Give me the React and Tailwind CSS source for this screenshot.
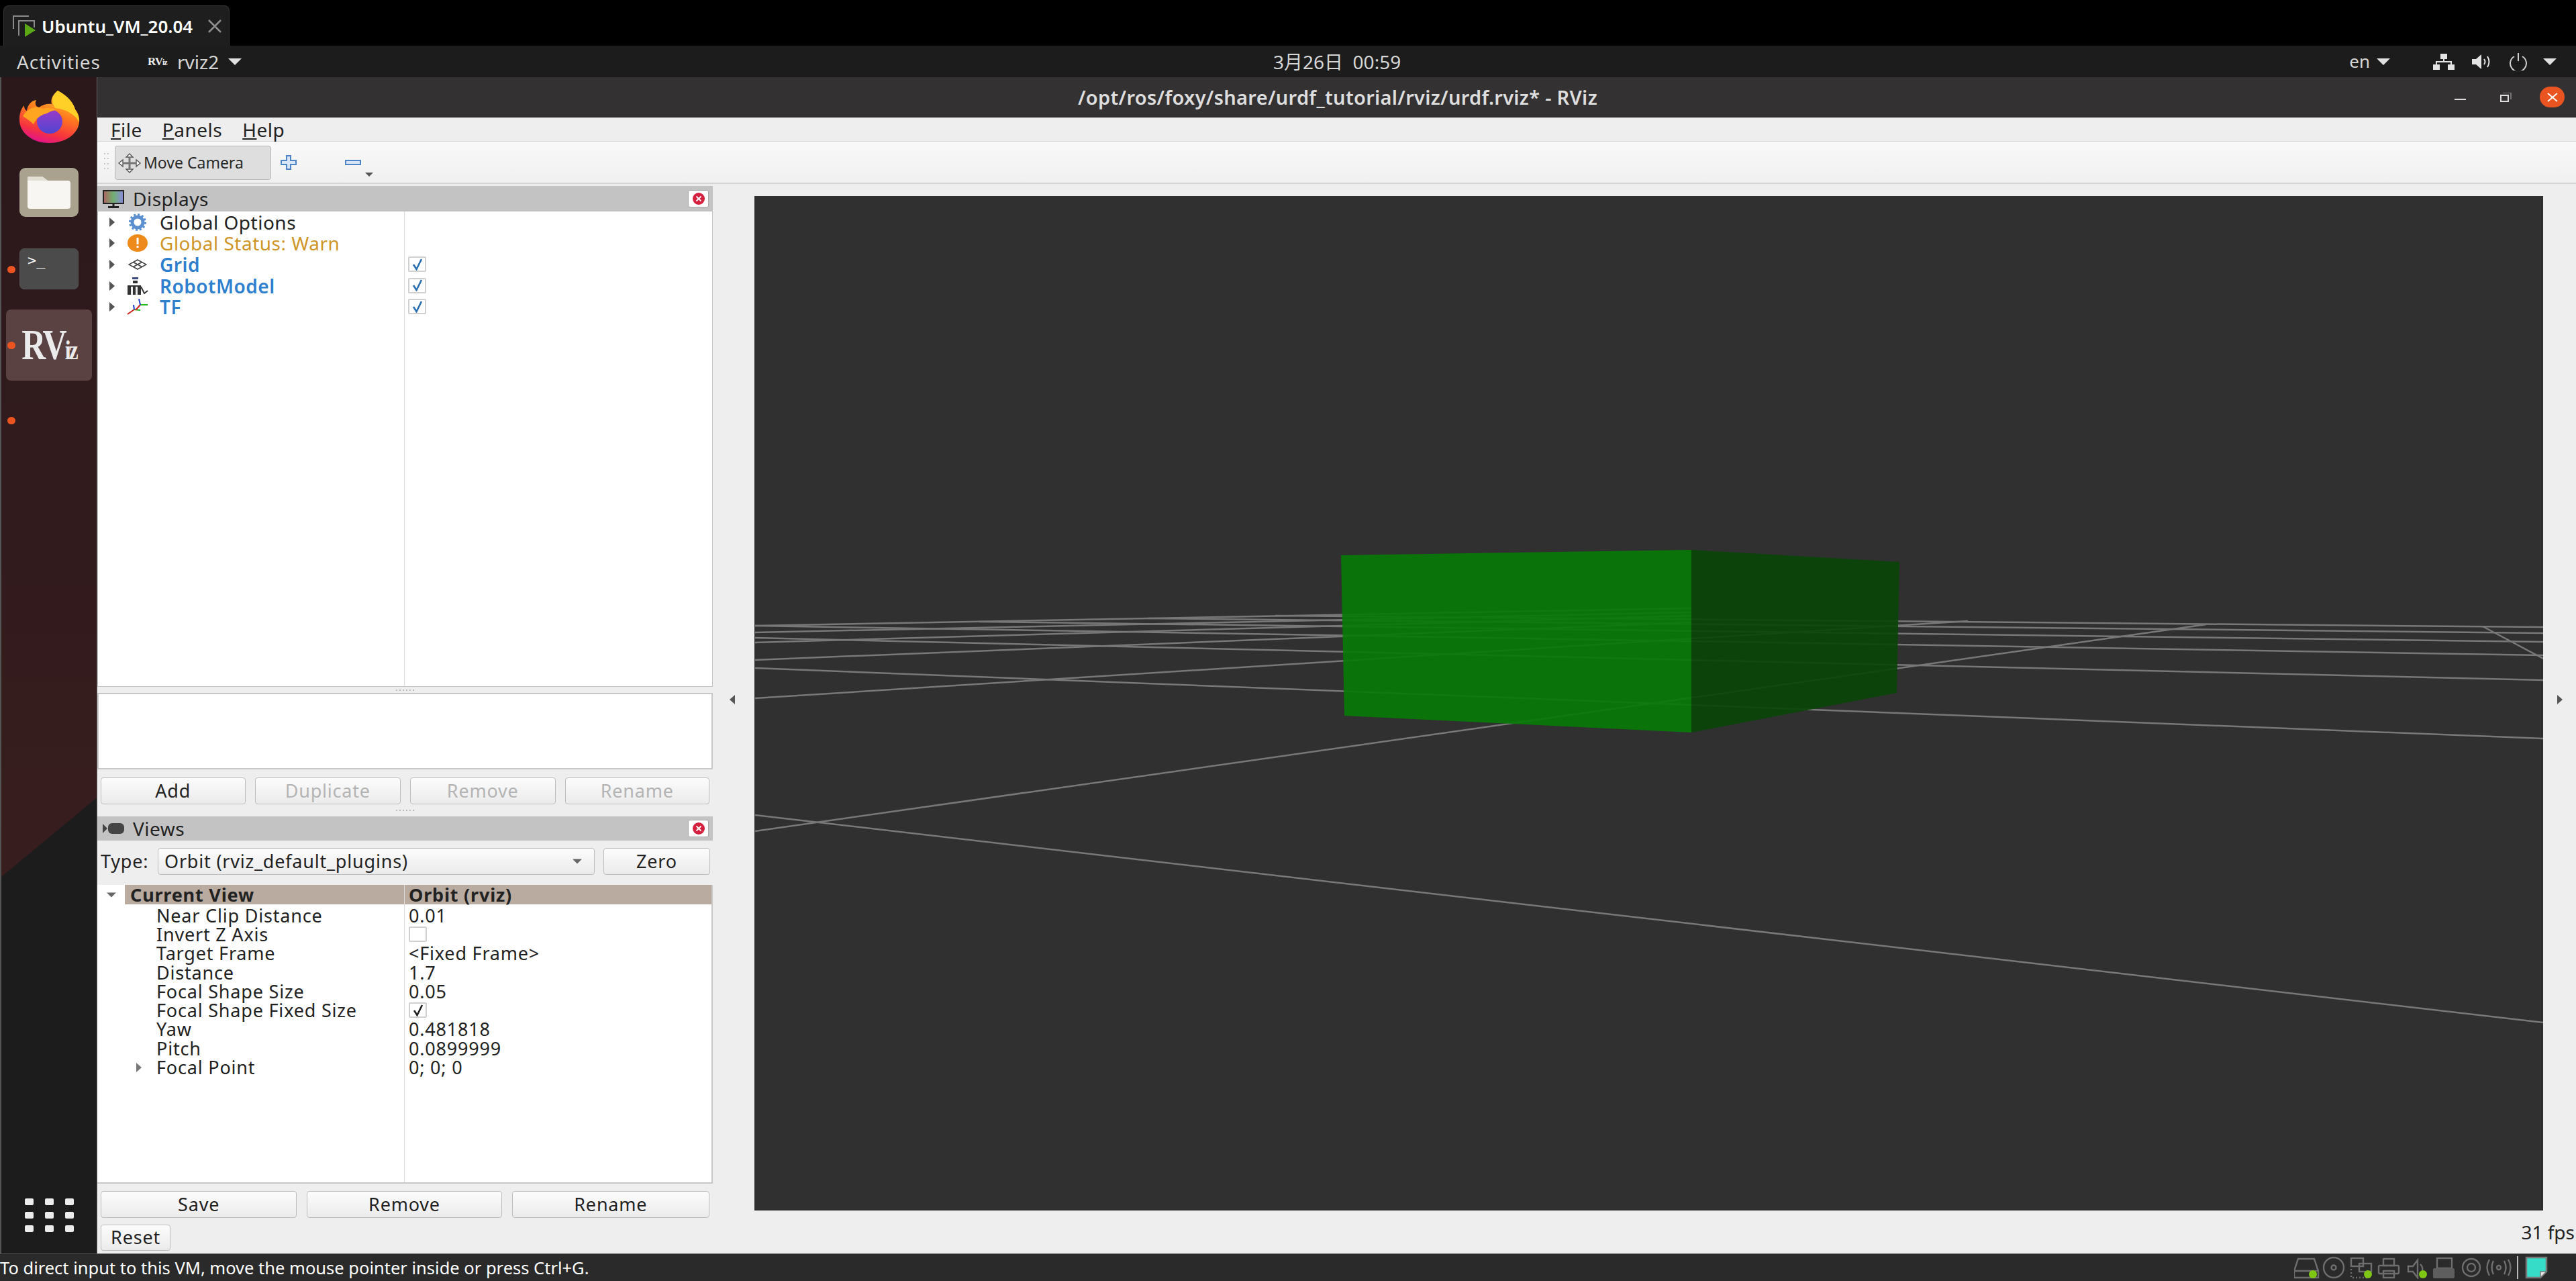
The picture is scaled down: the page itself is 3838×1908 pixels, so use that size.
import React from 'react';

const SANS = "[font-family:'Noto_Sans','Noto_Sans_CJK_SC',sans-serif]";

// grid lines of the 3D view, in page coordinates (the svg viewBox starts at the viewport corner)
const GRID_LINES = [
  [1125, 1040, 2932, 925],
  [1125, 995, 3789, 1100],
  [1125, 1238, 3287, 930],
  [1125, 1214, 3789, 1523],
  [1125, 983, 2520, 927],
  [1125, 957, 2520, 917],
  [1125, 942, 2520, 912],
  [1125, 932, 2520, 906],
  [1125, 950, 3789, 1013],
  [1125, 932, 3789, 976],
  [1459, 926, 3789, 956],
  [1711, 921, 3789, 943],
  [1900, 917, 3789, 934],
  [3699, 933, 3789, 981],
];

const VIEW_ROWS = [
  ['Near Clip Distance', '0.01'],
  ['Invert Z Axis', 'off'],
  ['Target Frame', '<Fixed Frame>'],
  ['Distance', '1.7'],
  ['Focal Shape Size', '0.05'],
  ['Focal Shape Fixed Size', 'on'],
  ['Yaw', '0.481818'],
  ['Pitch', '0.0899999'],
  ['Focal Point', '0; 0; 0'],
];

function Caret({ className = '' }) {
  return (
    <svg width="20" height="10" viewBox="0 0 20 10" className={className}>
      <polygon points="0,0 20,0 10,10" fill="currentColor" />
    </svg>
  );
}

function RightArrow({ color = '#555' }) {
  return (
    <svg width="8" height="14" viewBox="0 0 8 14">
      <polygon points="0,0 8,7 0,14" fill={color} />
    </svg>
  );
}

function Btn({ children, disabled, className = '' }) {
  return (
    <div
      className={`flex items-center justify-center h-[40px] rounded-[4px] border border-[#bdbdbd] bg-gradient-to-b from-[#fcfcfc] to-[#ebebeb] text-[27px] tracking-[0.8px] ${
        disabled ? 'text-[#b4b4b4]' : 'text-[#222]'
      } ${className}`}
    >
      {children}
    </div>
  );
}

function Check({ on, color = '#2a6fb0' }) {
  return (
    <div className="w-[27px] h-[23px] bg-white border-2 border-[#d0d0d0] rounded-[2px] flex items-center justify-center">
      {on && (
        <svg width="18" height="18" viewBox="0 0 18 18">
          <path d="M3 9 L7.5 16 L15 1" fill="none" stroke={color} strokeWidth="2.6" />
        </svg>
      )}
    </div>
  );
}

function CloseBtn() {
  return (
    <div className="w-[31px] h-[26px] bg-white border border-[#aaa] rounded-[3px] flex items-center justify-center">
      <svg width="20" height="20" viewBox="0 0 20 20">
        <circle cx="10" cy="10" r="9" fill="#d4213d" />
        <path d="M6.5 6.5 L13.5 13.5 M13.5 6.5 L6.5 13.5" stroke="#fff" strokeWidth="1.8" />
      </svg>
    </div>
  );
}

function Dots({ className = '' }) {
  return (
    <div className={`flex justify-center gap-[3px] ${className}`}>
      {[0, 1, 2, 3, 4, 5].map(i => (
        <span key={i} className="w-[2px] h-[2px] bg-[#bbb]" />
      ))}
    </div>
  );
}

function Firefox() {
  return (
    <svg width="91" height="78" viewBox="0 0 91 78">
      <defs>
        <linearGradient id="ffBody" x1="0.75" y1="0" x2="0.4" y2="1">
          <stop offset="0" stopColor="#ffd43a" />
          <stop offset="0.45" stopColor="#ff7a1e" />
          <stop offset="0.8" stopColor="#f5333f" />
          <stop offset="1" stopColor="#e31587" />
        </linearGradient>
        <linearGradient id="ffGlobe" x1="0.5" y1="0" x2="0.5" y2="1">
          <stop offset="0" stopColor="#9a3ac8" />
          <stop offset="1" stopColor="#4f46d0" />
        </linearGradient>
      </defs>
      <path d="M58 0 C74 8 82 20 84 28 C88 32 91 40 90 47 C88 66 68 78 45 78 C20 78 0 62 1 42 C1 34 4 26 8 22 C8 27 10 29 12 30 C13 22 18 15 26 14 C23 20 26 24 30 25 C36 20 44 19 49 20 C47 12 51 6 58 0 Z" fill="url(#ffBody)" />
      <path d="M58 0 C74 8 82 20 84 28 C88 34 90 40 90 47 C84 36 72 28 54 26 C47 14 51 6 58 0 Z" fill="#ffd028" />
      <ellipse cx="46" cy="46" rx="19" ry="18" fill="url(#ffGlobe)" />
      <path d="M6 38 C14 24 28 22 36 27 C44 24 52 27 56 29 C46 30 44 34 38 35 C30 38 26 42 22 50 C18 46 12 42 6 38 Z" fill="#ffa51f" />
    </svg>
  );
}

function RvizLogo({ big }) {
  return (
    <span
      className={`[font-family:'Liberation_Serif',serif] font-bold text-[#ecebeb] leading-none whitespace-nowrap ${
        big ? 'text-[50px] tracking-[-3px] scale-y-125' : 'text-[17px] tracking-[-1px]'
      }`}
    >
      RV<span className={big ? 'text-[32px]' : 'text-[12px]'}>iz</span>
    </span>
  );
}

function Dock() {
  return (
    <div className="relative w-[145px] flex flex-col items-center bg-gradient-to-b from-[#2a181b] to-[#3f2020] border-l-2 border-l-[#555] border-r border-r-[#666] overflow-hidden">
      {/* dark wedge of the wallpaper */}
      <svg className="absolute left-0 top-[1071px]" width="145" height="681" viewBox="0 0 145 681">
        <polygon points="0,120 145,0 145,681 0,681" fill="#1c1c1c" />
      </svg>

      <div className="relative mt-[20px]">
        <Firefox />
      </div>
      <div className="relative mt-[37px] w-[88px] h-[73px] rounded-[9px] bg-[#a8a28f] flex items-center justify-center">
        <svg width="64" height="48" viewBox="0 0 64 48">
          <path d="M2 0 H22 L30 6 H60 Q64 6 64 10 V44 Q64 48 60 48 H4 Q0 48 0 44 V2 Q0 0 2 0Z" fill="#f8f6f2" />
          <path d="M0 6 H30 L22 0 H2 Q0 0 0 2Z" fill="#e3dfd4" />
        </svg>
      </div>
      <div className="relative mt-[47px] w-[88px] h-[61px] rounded-[7px] bg-[#4b4b4b] border border-[#555]">
        <div className="absolute left-[11px] top-[4px] text-[#f0f0f0] text-[22px] leading-[26px] [font-family:'DejaVu_Sans_Mono',monospace]">
          &gt;_
        </div>
      </div>
      <div className="relative mt-[30px] w-[128px] h-[106px] rounded-[7px] bg-[#5a4242] flex items-center justify-center">
        <RvizLogo big />
      </div>

      <span className="absolute left-[9px] top-[281px] w-[12px] h-[11px] rounded-full bg-[#e95420]" />
      <span className="absolute left-[9px] top-[394px] w-[12px] h-[11px] rounded-full bg-[#e95420]" />
      <span className="absolute left-[9px] top-[506px] w-[12px] h-[11px] rounded-full bg-[#e95420]" />

      <div className="relative mt-auto mb-[32px] grid grid-cols-3 gap-x-[17px] gap-y-[10px]">
        {[0, 1, 2, 3, 4, 5, 6, 7, 8].map(i => (
          <span key={i} className="w-[13px] h-[10px] rounded-[2px] bg-[#ececec]" />
        ))}
      </div>
    </div>
  );
}

function DisplayIcon({ name }) {
  if (name === 'gear') {
    return (
      <svg width="28" height="26" viewBox="0 0 28 26">
        <circle cx="14" cy="13" r="8" fill="none" stroke="#5b8fd0" strokeWidth="5" />
        <circle cx="14" cy="13" r="11.5" fill="none" stroke="#5b8fd0" strokeWidth="3" strokeDasharray="3 3" />
      </svg>
    );
  }
  if (name === 'warn') {
    return (
      <svg width="30" height="26" viewBox="0 0 30 26">
        <ellipse cx="15" cy="13" rx="15" ry="13" fill="#ee8a1a" />
        <rect x="13.5" y="5" width="3" height="10" fill="#fff" />
        <rect x="13.5" y="17" width="3" height="3" fill="#fff" />
      </svg>
    );
  }
  if (name === 'grid') {
    return (
      <svg width="28" height="16" viewBox="0 0 28 16">
        <path d="M14 1 L27 8 L14 15 L1 8Z M7.5 4.5 L20.5 11.5 M20.5 4.5 L7.5 11.5" fill="none" stroke="#444" strokeWidth="1.6" />
      </svg>
    );
  }
  if (name === 'robot') {
    return (
      <svg width="32" height="26" viewBox="0 0 32 26">
        <rect x="8" y="0" width="9" height="3" fill="#3a4a80" />
        <rect x="9" y="5" width="7" height="4" fill="#333" />
        <rect x="1" y="12" width="20" height="14" fill="#333" />
        <rect x="6" y="14" width="3" height="12" fill="#eee" />
        <rect x="13" y="14" width="3" height="12" fill="#eee" />
        <path d="M21 14 L26 24 L31 20" fill="none" stroke="#333" strokeWidth="2" />
      </svg>
    );
  }
  return (
    <svg width="32" height="24" viewBox="0 0 32 24">
      <path d="M11 16 L1 23" stroke="#d02020" strokeWidth="2" />
      <path d="M11 16 L20 17" stroke="#20c020" strokeWidth="2" />
      <path d="M11 16 L10 9" stroke="#2040d0" strokeWidth="2" />
      <path d="M20 9 L13 17" stroke="#d02020" strokeWidth="2" />
      <path d="M20 9 L31 9" stroke="#20c020" strokeWidth="2" />
      <path d="M20 9 L18 0" stroke="#2040d0" strokeWidth="2" />
    </svg>
  );
}

function DisplayRow({ icon, label, className }) {
  return (
    <div className="h-[31.6px] flex items-center">
      <span className="w-[18px] ml-[17px] flex"><RightArrow /></span>
      <span className="w-[38px] flex justify-center pr-[2px] ml-[6px]"><DisplayIcon name={icon} /></span>
      <span className={`ml-[13px] text-[28px] tracking-[0.5px] leading-none ${className}`}>{label}</span>
    </div>
  );
}

function LeftPanels() {
  return (
    <div className="w-[917px] pt-[3px] flex flex-col">
      {/* Displays */}
      <div className="h-[38px] bg-[#c3c3c3] flex items-center pl-[8px] pr-[6px]">
        <svg width="32" height="27" viewBox="0 0 32 27">
          <defs>
            <linearGradient id="screenGrad" x1="0" y1="0" x2="1" y2="0">
              <stop offset="0" stopColor="#b06060" />
              <stop offset="0.5" stopColor="#70b070" />
              <stop offset="1" stopColor="#8a8ae0" />
            </linearGradient>
          </defs>
          <rect x="1" y="1" width="30" height="19" fill="url(#screenGrad)" stroke="#222" strokeWidth="2" />
          <path d="M16 20 V24 M8 25.5 H24" stroke="#222" strokeWidth="3" />
        </svg>
        <span className="ml-[13px] text-[28px] tracking-[0.5px] text-[#222]">Displays</span>
        <div className="ml-auto"><CloseBtn /></div>
      </div>
      <div className="h-[708px] bg-white border border-t-0 border-[#c4c4c4] flex">
        <div className="w-[457px] border-r border-[#dcdcdc]">
          <DisplayRow icon="gear" label="Global Options" className="text-[#222]" />
          <DisplayRow icon="warn" label="Global Status: Warn" className="text-[#cf9527]" />
          <DisplayRow icon="grid" label="Grid" className="text-[#2f7fcf] font-semibold" />
          <DisplayRow icon="robot" label="RobotModel" className="text-[#2f7fcf] font-semibold" />
          <DisplayRow icon="tf" label="TF" className="text-[#2f7fcf] font-semibold" />
        </div>
        <div className="flex-1 pl-[5px] pt-[63px]">
          <div className="h-[31.6px] flex items-center"><Check on /></div>
          <div className="h-[31.6px] flex items-center"><Check on /></div>
          <div className="h-[31.6px] flex items-center"><Check on /></div>
        </div>
      </div>
      <Dots className="h-[9px] items-center" />
      <div className="h-[114px] bg-white border-2 border-[#c8c8c8]" />
      <div className="mt-[12px] flex gap-[14px] px-[5px]">
        <Btn className="w-[216px]">Add</Btn>
        <Btn disabled className="w-[218px]">Duplicate</Btn>
        <Btn disabled className="w-[217px]">Remove</Btn>
        <Btn disabled className="w-[216px]">Rename</Btn>
      </div>
      <Dots className="h-[18px] items-center" />

      {/* Views */}
      <div className="h-[36px] bg-[#c3c3c3] flex items-center pl-[8px] pr-[6px]">
        <svg width="32" height="20" viewBox="0 0 32 20">
          <polygon points="0,3 7,10 0,17" fill="#444" />
          <rect x="8" y="2" width="24" height="16" rx="6" fill="#444" />
        </svg>
        <span className="ml-[13px] text-[28px] tracking-[0.5px] text-[#222]">Views</span>
        <div className="ml-auto"><CloseBtn /></div>
      </div>
      <div className="mt-[11px] h-[40px] flex items-center pl-[5px] pr-[4px] text-[27px] tracking-[0.8px] text-[#222]">
        <span className="w-[85px]">Type:</span>
        <div className="w-[651px] h-[40px] px-[9px] rounded-[4px] border border-[#bdbdbd] bg-gradient-to-b from-[#fcfcfc] to-[#ebebeb] flex items-center justify-between">
          <span>Orbit (rviz_default_plugins)</span>
          <Caret className="w-[14px] h-[8px] mr-[9px] text-[#666]" />
        </div>
        <Btn className="w-[159px] ml-[13px]">Zero</Btn>
      </div>
      <div className="mt-[15px] h-[445px] bg-white border-r-2 border-b-2 border-[#c8c8c8] flex text-[27px] tracking-[0.8px] text-[#222]">
        <div className="w-[458px] border-r border-[#dcdcdc]">
          <div className="h-[29px] flex">
            <div className="w-[41px] flex items-center justify-center">
              <Caret className="w-[14px] h-[8px] text-[#666]" />
            </div>
            <div className="flex-1 bg-[#b9aba0] pl-[8px] font-bold leading-[29px]">Current View</div>
          </div>
          <div className="pt-[2px]">
            {VIEW_ROWS.map(([label]) => (
              <div key={label} className="h-[28.3px] flex items-center pl-[88px] relative leading-none whitespace-nowrap">
                {label === 'Focal Point' && (
                  <span className="absolute left-[58px] flex"><RightArrow color="#777" /></span>
                )}
                {label}
              </div>
            ))}
          </div>
        </div>
        <div className="flex-1">
          <div className="h-[29px] bg-[#b9aba0] pl-[6px] font-bold leading-[29px]">Orbit (rviz)</div>
          <div className="pt-[2px]">
            {VIEW_ROWS.map(([label, value]) => (
              <div key={label} className="h-[28.3px] flex items-center pl-[6px] leading-none">
                {value === 'off' && <Check />}
                {value === 'on' && <Check on color="#222" />}
                {value !== 'on' && value !== 'off' && value}
              </div>
            ))}
          </div>
        </div>
      </div>
      <div className="mt-[11px] flex gap-[15px] px-[5px]">
        <Btn className="w-[293px]">Save</Btn>
        <Btn className="w-[291px]">Remove</Btn>
        <Btn className="w-[295px]">Rename</Btn>
      </div>
      <Btn className="mt-[10px] ml-[5px] w-[104px] !h-[39px]">Reset</Btn>
    </div>
  );
}

function Scene() {
  return (
    <svg className="block w-full h-full" viewBox="1124 292 2665 1511">
      {GRID_LINES.map(([x1, y1, x2, y2], i) => (
        <line key={i} x1={x1} y1={y1} x2={x2} y2={y2} stroke="#787878" strokeWidth="2.5" />
      ))}
      <polygon points="1998,827 2520,819 2520,1091 2003,1066" fill="rgb(8,121,8)" fillOpacity="0.92" />
      <polygon points="2520,819 2830,837 2826,1032 2520,1091" fill="rgb(9,69,9)" fillOpacity="0.92" />
    </svg>
  );
}

function StatusIcons() {
  const s = { stroke: '#6e6e6e', strokeWidth: 2.4, fill: 'none' };
  return (
    <div className="ml-auto flex items-center h-full">
      <svg width="390" height="34" viewBox="3418 1874 390 34" className="mr-[30px]">
        {/* hard disk */}
        <path d="M3424 1878 H3448 L3454 1896 V1906 H3418 V1896Z M3418 1896 H3454" {...s} />
        <circle cx="3446" cy="1901" r="6" fill="#7fc712" />
        {/* cd */}
        <circle cx="3477" cy="1891" r="15" {...s} />
        <circle cx="3477" cy="1891" r="3.5" {...s} />
        {/* network */}
        <rect x="3503" y="1877" width="18" height="12" {...s} />
        <rect x="3515" y="1885" width="18" height="12" {...s} />
        <path d="M3503 1893 V1906 H3528" stroke="#6e6e6e" strokeWidth="2.4" strokeDasharray="2 3" fill="none" />
        <circle cx="3528" cy="1901" r="6" fill="#7fc712" />
        {/* printer */}
        <rect x="3551" y="1878" width="16" height="10" {...s} />
        <rect x="3544" y="1888" width="30" height="12" rx="2" {...s} />
        <rect x="3551" y="1896" width="16" height="10" {...s} />
        {/* audio */}
        <path d="M3588 1889 H3595 L3602 1880 V1906 L3595 1897 H3588Z" {...s} />
        <path d="M3606 1886 Q3610 1890 3609 1895" {...s} />
        <circle cx="3610" cy="1901" r="6" fill="#7fc712" />
        {/* usb */}
        <rect x="3631" y="1877" width="22" height="15" {...s} />
        <rect x="3625" y="1892" width="32" height="15" rx="2" fill="#5e5e5e" />
        {/* webcam */}
        <circle cx="3682" cy="1891" r="13" {...s} />
        <circle cx="3682" cy="1891" r="6" {...s} />
        {/* shared folders */}
        <circle cx="3723" cy="1891" r="3" {...s} />
        <path d="M3715 1881 Q3710 1891 3715 1901 M3731 1881 Q3736 1891 3731 1901 M3709 1879 Q3702 1891 3709 1903 M3737 1879 Q3744 1891 3737 1903" {...s} />
        <line x1="3751" y1="1871" x2="3751" y2="1908" stroke="#e8e8e8" strokeWidth="1.5" />
        {/* notes */}
        <path d="M3764 1876 H3794 V1897 L3785 1906 H3764Z" fill="#36dcc8" stroke="#777" strokeWidth="2.5" />
        <path d="M3794 1897 H3785 V1906Z" fill="#e8e8e8" stroke="#777" strokeWidth="1.5" />
      </svg>
    </div>
  );
}

export default function App() {
  return (
    <div className={`w-full h-[1908px] flex flex-col overflow-hidden bg-black ${SANS}`}>
      {/* VMware tab strip */}
      <div className="h-[68px] shrink-0 flex items-end pl-[5px]">
        <div className="w-[337px] h-[60px] bg-[#1e1e1e] rounded-t-[8px] border-t border-x border-[#333] flex items-center pl-[13px] pr-[11px]">
          <svg width="34" height="32" viewBox="0 0 34 32">
            <path d="M1 20 V1 H24 M9 30 V8 H32 V18" fill="none" stroke="#8a8a8a" strokeWidth="2" />
            <polygon points="18,12 34,22 18,32" fill="#5aa816" />
          </svg>
          <span className="ml-[9px] text-white text-[26px] font-semibold leading-none whitespace-nowrap">Ubuntu_VM_20.04</span>
          <svg className="ml-auto" width="20" height="20" viewBox="0 0 20 20">
            <path d="M1 1 L19 19 M19 1 L1 19" stroke="#8e8e8e" strokeWidth="2.5" />
          </svg>
        </div>
      </div>

      {/* GNOME top bar */}
      <div className="h-[47px] shrink-0 bg-[#1c1c1c] flex items-center text-[#d6d6d6] text-[28px] relative">
        <span className="ml-[25px] tracking-[0.8px] w-[125px] whitespace-nowrap">Activities</span>
        <span className="ml-[70px] w-[29px] flex"><RvizLogo /></span>
        <span className="ml-[15px]">rviz2</span>
        <Caret className="ml-[14px] text-[#e0e0e0]" />
        <span className="absolute left-[1897px] text-[28px] whitespace-nowrap">3月26日&nbsp;&nbsp;00:59</span>
        <div className="ml-auto flex items-center pr-[29px]">
          <span className="text-[26px]">en</span>
          <Caret className="ml-[10px] text-[#e0e0e0]" />
          <svg className="ml-[64px]" width="32" height="24" viewBox="0 0 32 24">
            <path d="M11 0 H21 V8 H11Z M0 16 H10 V24 H0Z M22 16 H32 V24 H22Z" fill="#e4e4e4" />
            <path d="M16 8 V12 M5 16 V12 H27 V16" fill="none" stroke="#e4e4e4" strokeWidth="2" />
          </svg>
          <svg className="ml-[26px]" width="30" height="24" viewBox="0 0 30 24">
            <path d="M0 8 H6 L14 1 V23 L6 16 H0Z" fill="#e4e4e4" />
            <path d="M18 8 Q21 12 18 16 M23 4 Q28 12 23 20" fill="none" stroke="#e4e4e4" strokeWidth="2" />
          </svg>
          <svg className="ml-[25px]" width="28" height="26" viewBox="0 0 28 26">
            <path d="M8 5 A12 12 0 1 0 20 5 M14 0 V12" fill="none" stroke="#d0d0d0" strokeWidth="2" />
          </svg>
          <Caret className="ml-[23px] text-[#e0e0e0]" />
        </div>
      </div>

      <div className="flex-1 flex min-h-0">
        <Dock />
        <div className="flex-1 flex flex-col min-w-0 bg-[#eeeeee]">
          {/* title bar */}
          <div className="h-[60px] shrink-0 bg-[#333132] flex items-center relative border-b border-[#222]">
            <span className="absolute left-[1461px] text-[#dedede] text-[29px] tracking-[0.3px] font-semibold whitespace-nowrap">
              /opt/ros/foxy/share/urdf_tutorial/rviz/urdf.rviz* - RViz
            </span>
            <div className="ml-auto flex items-center pr-[17px]">
              <span className="w-[17px] h-[2px] bg-[#ddd] mt-[7px]" />
              <svg className="ml-[51px]" width="17" height="14" viewBox="0 0 17 14">
                <path d="M4 0 H16 V10" fill="none" stroke="#888" strokeWidth="1.5" />
                <rect x="1" y="4" width="11" height="9" fill="none" stroke="#ddd" strokeWidth="2" />
              </svg>
              <div className="ml-[42px] w-[37px] h-[31px] rounded-full bg-[#e95420] flex items-center justify-center">
                <svg width="16" height="14" viewBox="0 0 16 14">
                  <path d="M1 1 L15 13 M15 1 L1 13" stroke="#fff" strokeWidth="2" />
                </svg>
              </div>
            </div>
          </div>

          {/* menu bar */}
          <div className="h-[36px] shrink-0 flex items-center pl-[20px] text-[28px] tracking-[0.5px] text-[#222] border-b border-[#d8d8d8] leading-none">
            <span><span className="underline decoration-2 underline-offset-2">F</span>ile</span>
            <span className="ml-[30px]"><span className="underline decoration-2 underline-offset-2">P</span>anels</span>
            <span className="ml-[30px]"><span className="underline decoration-2 underline-offset-2">H</span>elp</span>
          </div>

          {/* tool bar */}
          <div className="h-[63px] shrink-0 flex items-center bg-gradient-to-b from-[#f9f9f9] to-[#f0f0f0] border-b-2 border-[#d4d4d4]">
            <div className="ml-[10px] w-[8px] h-[28px] grid grid-cols-2 gap-[2px] opacity-60">
              {[0, 1, 2, 3, 4, 5, 6, 7].map(i => <span key={i} className="w-[2px] h-[2px] bg-[#aaa]" />)}
            </div>
            <div className="ml-[8px] mt-[2px] w-[233px] h-[51px] rounded-[4px] bg-[#dedede] border border-[#b5b5b5] flex items-center pl-[4px]">
              <svg width="34" height="30" viewBox="0 0 34 30">
                <path d="M17 1 L12 6 H22Z M17 29 L12 24 H22Z M1 15 L7 10 V20Z M33 15 L27 10 V20Z" fill="#fff" stroke="#555" strokeWidth="1.4" />
                <path d="M17 6 V24 M7 15 H27" stroke="#777" strokeWidth="3" />
              </svg>
              <span className="ml-[4px] text-[23px] text-[#2a2a2a] whitespace-nowrap">Move Camera</span>
            </div>
            <svg className="ml-[14px]" width="24" height="22" viewBox="0 0 24 22">
              <path d="M9 1 H15 V8 H23 V14 H15 V21 H9 V14 H1 V8 H9Z" fill="#d7e5f6" stroke="#4d84c8" strokeWidth="2" />
            </svg>
            <svg className="ml-[72px]" width="24" height="8" viewBox="0 0 24 8">
              <rect x="1" y="1" width="22" height="6" fill="#d7e5f6" stroke="#4d84c8" strokeWidth="2" />
            </svg>
            <Caret className="ml-[6px] mt-[36px] !w-[12px] !h-[6px] text-[#555]" />
          </div>

          {/* panels + 3D view */}
          <div className="flex-1 flex min-h-0">
            <LeftPanels />
            <div className="flex-1 flex flex-col min-w-0">
              <div className="flex-1 flex pt-[18px] min-h-0">
                <div className="w-[62px] flex items-center justify-center pr-[5px] pb-[12px]">
                  <svg width="8" height="14" viewBox="0 0 8 14">
                    <polygon points="8,0 0,7 8,14" fill="#555" />
                  </svg>
                </div>
                <div className="w-[2665px] bg-[#303030]">
                  <Scene />
                </div>
                <div className="flex-1 flex items-center justify-center pb-[12px]">
                  <RightArrow />
                </div>
              </div>
              <div className="h-[64px] shrink-0 flex items-center justify-end pr-[2px] text-[28px] text-[#222]">31 fps</div>
            </div>
          </div>
        </div>
      </div>

      {/* VMware status bar */}
      <div className="h-[41px] shrink-0 bg-[#2a2a2a] flex items-center text-white text-[25.5px] whitespace-nowrap border-t border-[#555]">
        <span>To direct input to this VM, move the mouse pointer inside or press Ctrl+G.</span>
        <StatusIcons />
      </div>
    </div>
  );
}
